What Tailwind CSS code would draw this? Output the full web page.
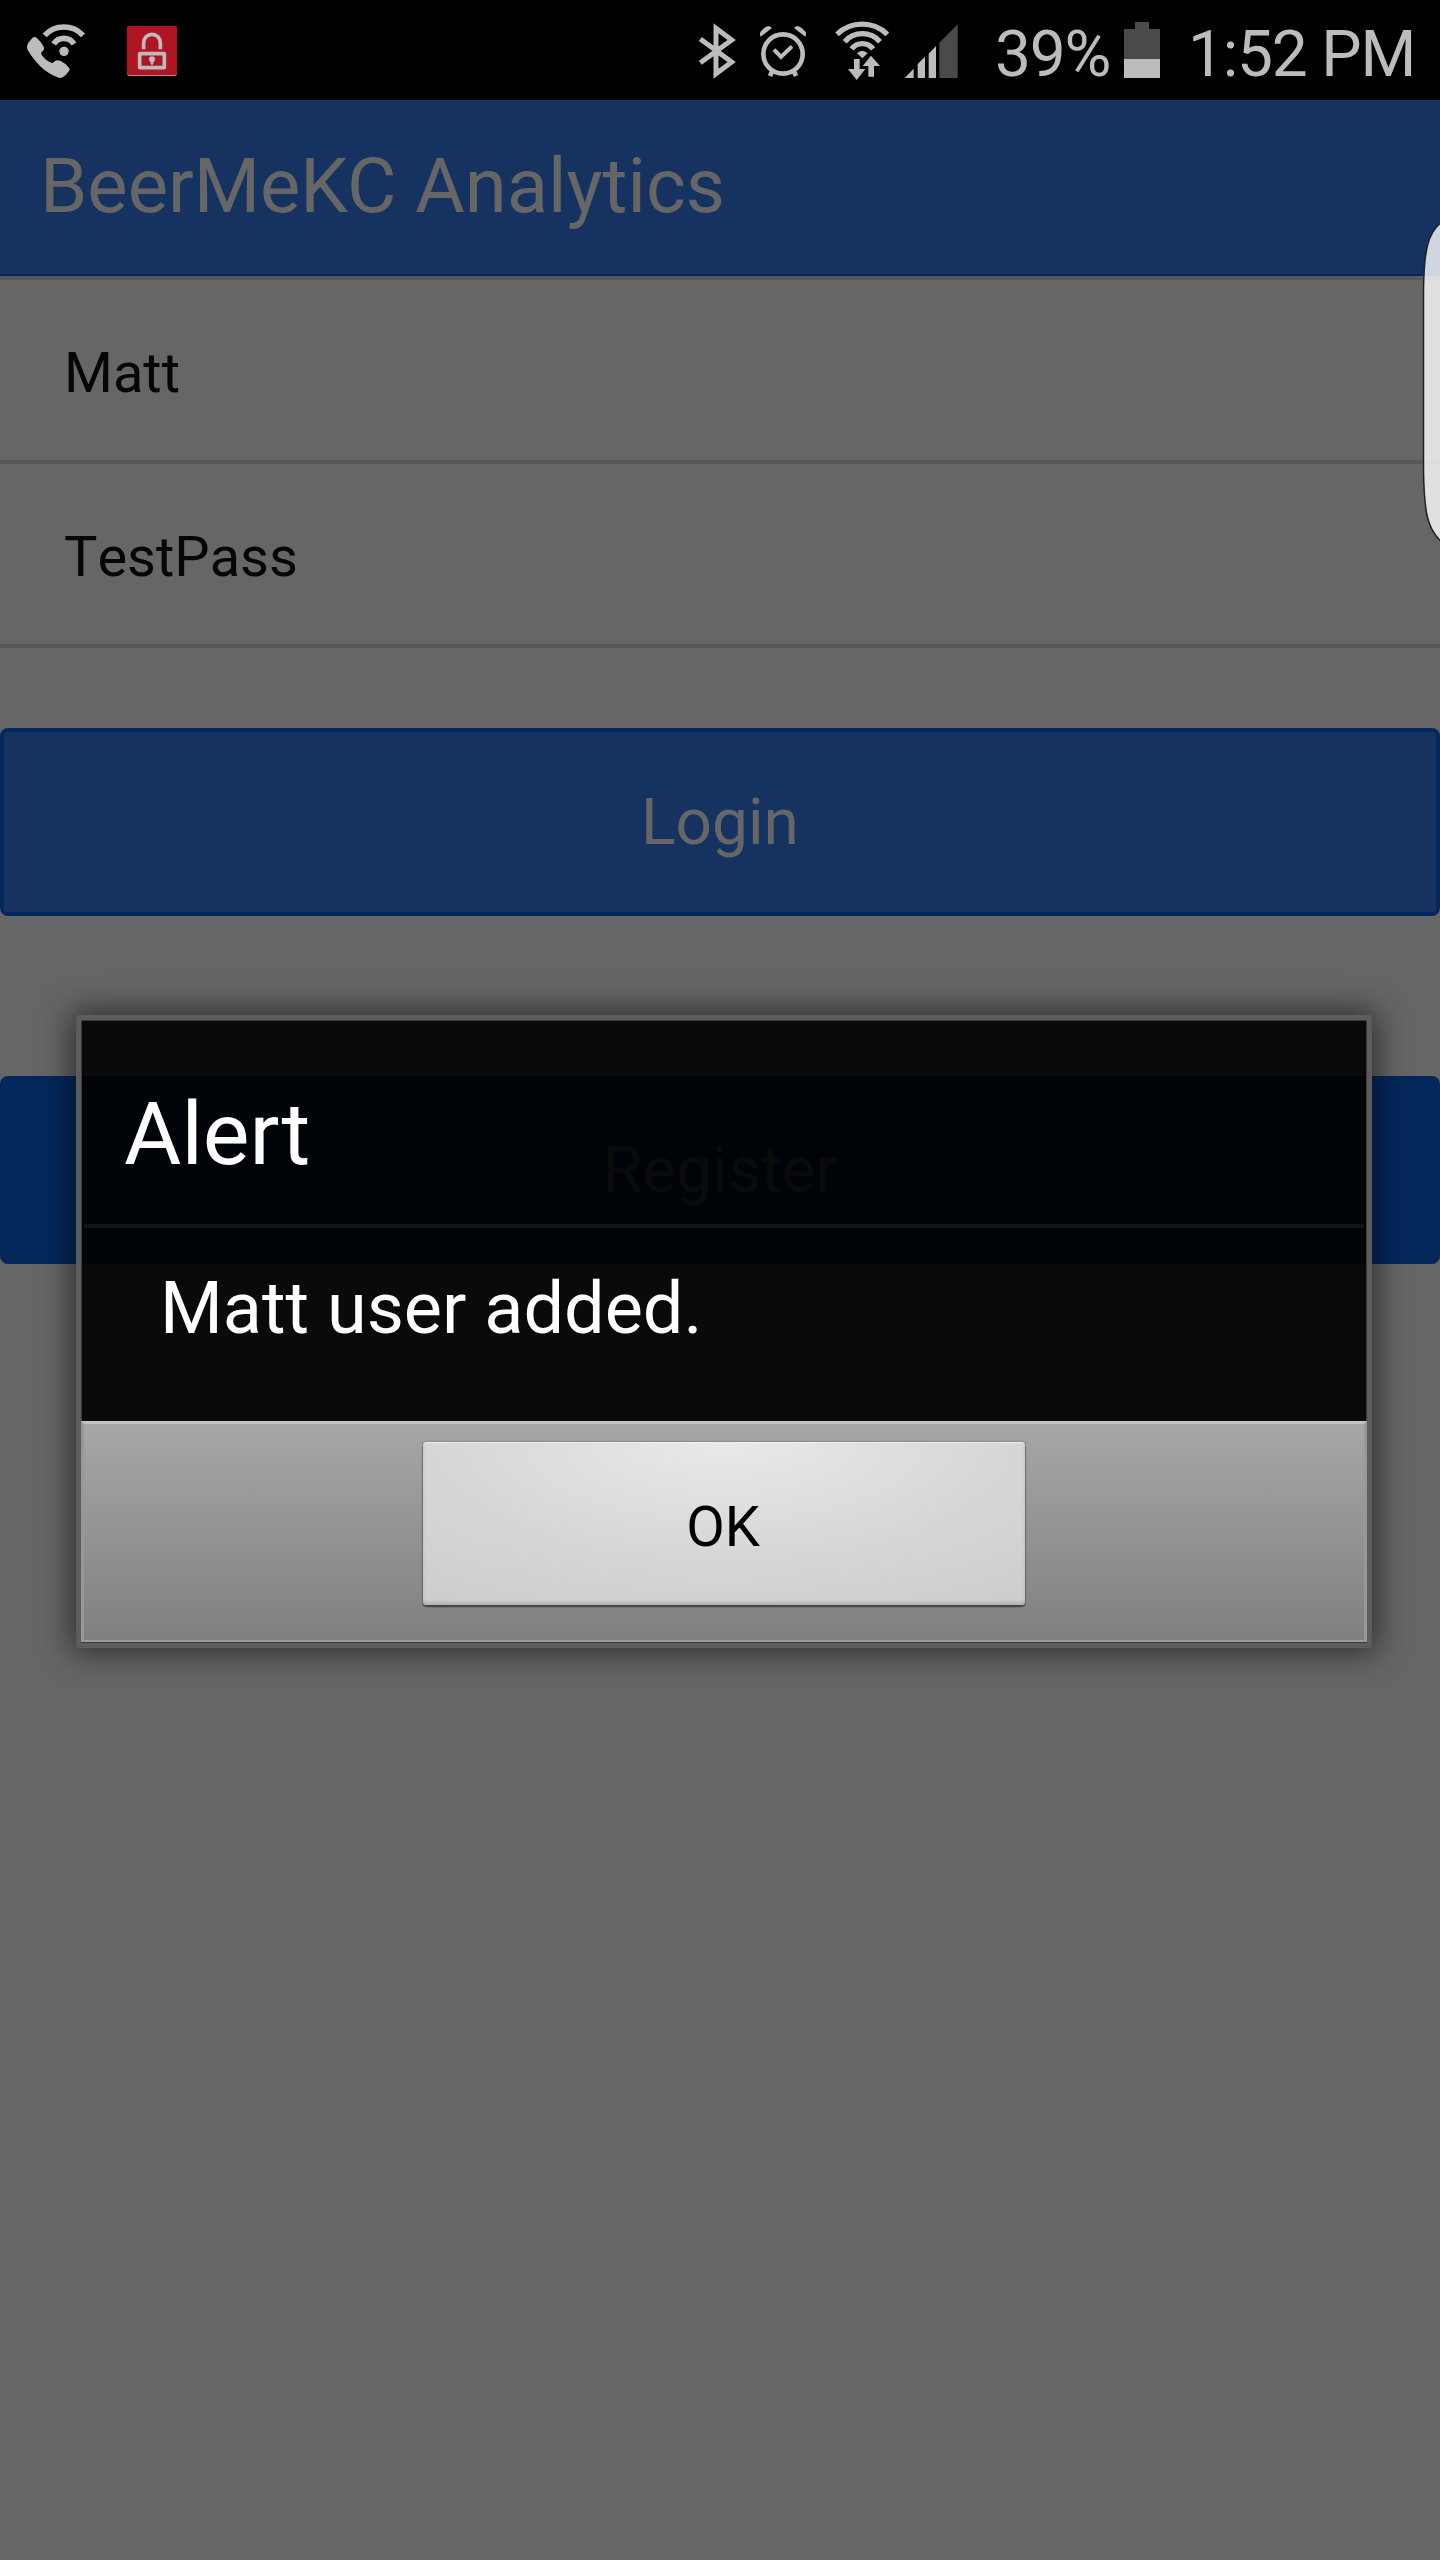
<!DOCTYPE html>
<html lang="en">
<head>
<meta charset="utf-8">
<title>BeerMeKC Analytics</title>
<script src="https://cdn.jsdelivr.net/npm/@tailwindcss/browser@4"></script>
</head>
<body class="bg-[#666666] font-['Roboto',sans-serif]">
<div class="relative w-[1440px] h-[2560px] overflow-hidden bg-[#666666]">

  <!-- Status bar -->
  <header class="flex h-[100px] items-start bg-black pt-5 pl-[25px] text-[64px] leading-[70px] tracking-[-1.2px] text-[#bcbcbc] whitespace-nowrap">
    <svg class="h-[60px] w-[63px] shrink-0" viewBox="75 60 189 180" fill="none">
      <path fill="#bcbcbc" d="M97 114Q103 108 110 113Q122 124 130 138Q134 145 131 151L123 158C126 171 142 185 158 189L165 183Q173 178 182 183Q198 191 207 203Q211 208 207 213Q198 226 189 231Q182 236 173 232C135 219 102 184 82 148Q79 139 84 130Z"/>
      <circle cx="192" cy="154" r="14" fill="#bcbcbc"/>
      <path stroke="#bcbcbc" stroke-width="17" d="M161 132A36 36 0 0 1 222 132M134 106A78.600 78.600 0 0 1 249 106"/>
    </svg>
    <svg class="ml-[39px] h-[60px] w-[50px] shrink-0" viewBox="381 60 150 180" fill="none">
      <rect x="381" y="78" width="150" height="150" rx="10" fill="#c58085"/>
      <rect x="381" y="78" width="150" height="147" rx="9" fill="#b01523"/>
      <path stroke="#bcbcbc" stroke-width="11" d="M431 148V128a25 25 0 0 1 50 0V148"/>
      <rect x="419" y="161" width="74" height="42" rx="2" stroke="#bcbcbc" stroke-width="11"/>
      <circle cx="456" cy="178" r="9" fill="#bcbcbc"/>
      <path fill="#bcbcbc" d="M452 178h8v14l-4 4l-4-4z"/>
    </svg>
    <svg class="ml-[521px] h-[60px] w-[38px] shrink-0" viewBox="84 60 114 180" fill="none">
      <path stroke="#bcbcbc" stroke-width="15" d="M91 117L185 186L138 221V85L185 120L91 188"/>
    </svg>
    <svg class="ml-[23px] h-[60px] w-[48px] shrink-0" viewBox="267 60 144 180" fill="none" stroke="#bcbcbc">
      <circle cx="339" cy="162" r="59" stroke-width="14"/>
      <path stroke-width="12" d="M312 149L333 171L366 139"/>
      <path stroke-width="14" d="M307 213L300 228M371 213L378 228"/>
      <path stroke="none" fill="#bcbcbc" d="M272 110Q267 101 273 94Q282 82 294 78Q301 78 306 84ZM406 110Q411 101 405 94Q396 82 384 78Q377 78 372 84Z"/>
    </svg>
    <svg class="ml-[27px] h-[60px] w-[56px] shrink-0" viewBox="492 60 168 180" fill="none">
      <path stroke="#bcbcbc" stroke-width="16" d="M501 103A109 109 0 0 1 652 103M524 125A70.500 70.500 0 0 1 630 125M545 147A40 40 0 0 1 609 147"/>
      <path fill="#bcbcbc" d="M561 160Q577 145 593 160L577 175Z"/>
      <path fill="#bcbcbc" stroke="#000" stroke-width="5" paint-order="stroke" d="M552 177H569V207H586L560 240L534 207H552ZM595 230V198H578L603 167L630 198H612V230Z"/>
    </svg>
    <svg class="ml-[14px] h-[60px] w-[54px] shrink-0" viewBox="702 60 162 180" fill="#bcbcbc">
      <path d="M704 234L731 206V234ZM743 234V192L765 170V234ZM776 234V161L798 138V234Z"/>
      <path fill="#4a4a4a" d="M808 234V128L863 73V234Z"/>
    </svg>
    <span class="ml-[37px] w-[129px] shrink-0">39%</span>
    <svg class="h-[60px] w-[36px] shrink-0" viewBox="432 60 108 180" fill="#4a4a4a">
      <path d="M432 177V87H465V66H507V87H540V177Z"/>
      <path fill="#bcbcbc" d="M432 177H540V234H432Z"/>
    </svg>
    <span class="ml-[28px]">1:52 PM</span>
  </header>

  <!-- App screen -->
  <main>
    <h1 class="h-[176px] border-b-2 border-[#04285c] bg-[#163261] pl-10 text-[76px] leading-[172px] text-[#666666]">BeerMeKC Analytics</h1>
    <div class="h-[188px] border-y-4 border-[#585858] pl-16 text-[56px] leading-[186px] text-[#060606]">Matt</div>
    <div class="h-[184px] border-b-4 border-[#585858] pl-16 text-[56px] leading-[186px] text-[#060606] [font-kerning:none]">TestPass</div>
    <div class="mt-20 h-[188px] rounded-lg border-4 border-[#04285c] bg-[#163261] text-center text-[64px] leading-[182px] text-[#666666]">Login</div>
    <div class="mt-40 h-[188px] rounded-lg border-4 border-[#04285c] bg-[#04285c] text-center text-[64px] leading-[182px] text-[#666666]">Register</div>
  </main>

  <!-- Edge panel handle -->
  <svg class="absolute top-[215px] right-0 h-[335px] w-5" viewBox="1420 215 20 335">
    <path fill="#fff" fill-opacity=".8" stroke="#202020" stroke-width="1.500" d="M1442 222C1428 232 1424 250 1423.500 290V470C1424 510 1427 530 1442 542"/>
  </svg>

  <!-- Alert dialog -->
  <section class="absolute top-[1015px] left-[76px] h-[633px] w-[1296px] rounded-[4px] border-[5px] border-[#5c5c5c] shadow-[0_0_32px_5px_rgba(0,0,0,0.55)]">
    <div class="h-[623px] border border-[#3c3c3c]">
      <div class="h-[400px] bg-black/90 text-white">
        <h2 class="h-[203px] pt-[23px] pl-[42px] text-[88px] leading-[180px]">Alert</h2>
        <div class="mx-[2px] h-1 bg-[#101317]"></div>
        <p class="pl-[78px] text-[72px] leading-[162px] [font-kerning:none]">Matt user added.</p>
      </div>
      <div class="-mx-px flex h-[221px] justify-center border-x-[3px] border-t-[3px] border-b-2 border-x-[#989898] border-t-[#c3c3c3] border-b-[#9a9a9a] bg-linear-to-b from-[#a7a7a7] to-[#808080] pt-[18px]">
        <div class="h-[163px] w-[602px] rounded-[4px] bg-[radial-gradient(ellipse_90%_130%_at_50%_0%,#e9e9e9,#d6d6d6_55%,#cbcbcb)] pr-[2px] text-center text-[56px] leading-[170px] text-black shadow-[0_2px_2px_#3c3c3c,0_0_2px_#555,inset_0_-3px_3px_#b4b4b4,inset_0_1px_1px_#eee]">OK</div>
      </div>
    </div>
  </section>

</div>
</body>
</html>
